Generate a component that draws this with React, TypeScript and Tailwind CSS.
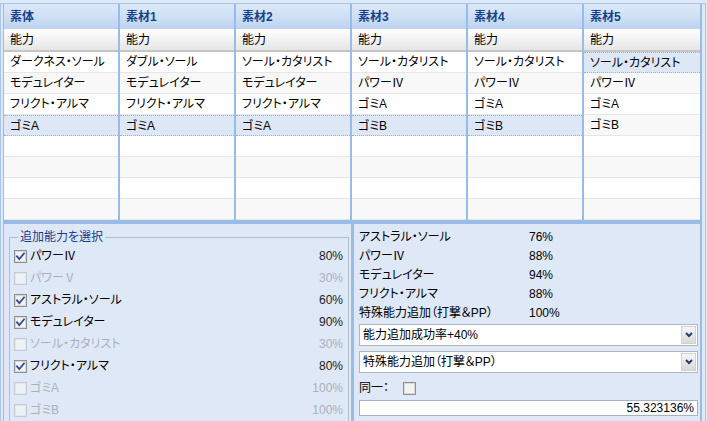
import React from 'react';

type Col = { title: string; rows: string[]; selected: number };

const columns: Col[] = [
  { title: '素体', rows: ['ダークネス・ソール', 'モデュレイター', 'フリクト・アルマ', 'ゴミA'], selected: 3 },
  { title: '素材1', rows: ['ダブル・ソール', 'モデュレイター', 'フリクト・アルマ', 'ゴミA'], selected: 3 },
  { title: '素材2', rows: ['ソール・カタリスト', 'モデュレイター', 'フリクト・アルマ', 'ゴミA'], selected: 3 },
  { title: '素材3', rows: ['ソール・カタリスト', 'パワーⅣ', 'ゴミA', 'ゴミB'], selected: 3 },
  { title: '素材4', rows: ['ソール・カタリスト', 'パワーⅣ', 'ゴミA', 'ゴミB'], selected: 3 },
  { title: '素材5', rows: ['ソール・カタリスト', 'パワーⅣ', 'ゴミA', 'ゴミB'], selected: 0 },
];

const abilities = [
  { name: 'パワーⅣ', rate: '80%', checked: true, enabled: true },
  { name: 'パワーⅤ', rate: '30%', checked: false, enabled: false },
  { name: 'アストラル・ソール', rate: '60%', checked: true, enabled: true },
  { name: 'モデュレイター', rate: '90%', checked: true, enabled: true },
  { name: 'ソール・カタリスト', rate: '30%', checked: false, enabled: false },
  { name: 'フリクト・アルマ', rate: '80%', checked: true, enabled: true },
  { name: 'ゴミA', rate: '100%', checked: false, enabled: false },
  { name: 'ゴミB', rate: '100%', checked: false, enabled: false },
];

const results = [
  ['アストラル・ソール', '76%'],
  ['パワーⅣ', '88%'],
  ['モデュレイター', '94%'],
  ['フリクト・アルマ', '88%'],
  ['特殊能力追加（打撃＆PP）', '100%'],
];

function CheckBox({ checked, enabled }: { checked: boolean; enabled: boolean }) {
  return (
    <svg width="13" height="13" viewBox="0 0 13 13" className="shrink-0">
      <rect x="0.5" y="0.5" width="12" height="12" fill={enabled ? '#f3f3f3' : '#eef1f5'} stroke={enabled ? '#8e8f8f' : '#c5cbd4'} />
      <rect x="1.5" y="1.5" width="10" height="10" fill="none" stroke={enabled ? '#d9d9d9' : '#e3e7ec'} />
      {checked && (
        <path d="M3 6.3 L5.3 9 L10 3.4" fill="none" stroke="#2f4a96" strokeWidth="1.8" strokeLinecap="square" />
      )}
    </svg>
  );
}

function Combo({ text }: { text: string }) {
  return (
    <div className="flex h-[22px] items-stretch border border-[#b1b7c0] bg-white">
      <div className="flex flex-1 items-center pl-[3px] text-[12px] text-black">{text}</div>
      <div className="m-[1px] flex w-[15px] items-center justify-center border border-[#cfd2d6] bg-gradient-to-b from-[#f6f6f6] to-[#d9d9d9]">
        <svg width="8" height="6" viewBox="0 0 8 6">
          <path d="M1 1 L4 4 L7 1" fill="none" stroke="#233f78" strokeWidth="2" />
        </svg>
      </div>
    </div>
  );
}

function GridColumn({ col, last }: { col: Col; last: boolean }) {
  const cells = [...col.rows, '', '', '', ''];
  return (
    <div className={`flex flex-col ${last ? 'flex-1' : 'w-[116px] border-r-2 border-[#99bbe8]'}`}>
      <div className="flex h-[25px] items-center bg-gradient-to-b from-[#dce8f7] via-[#cfe0f5] to-[#bcd2ef] pl-[6px] text-[12px] font-bold text-[#15428b]">
        {col.title}
      </div>
      <div className="flex h-[23px] items-center border-b-2 border-[#c6c6c6] bg-gradient-to-b from-white to-[#e6e6e6] pl-[6px] text-[12px] text-black">
        能力
      </div>
      {cells.map((c, i) => {
        const sel = i === col.selected;
        const bg = sel
          ? 'bg-[#dde7f6] border-y border-dotted border-[#98b0dc]'
          : i % 2 === 1
            ? 'bg-[#f8f8f8] border-b border-[#e6e6e6]'
            : 'bg-white border-b border-[#e6e6e6]';
        return (
          <div key={i} className={`flex h-[21px] items-center pl-[6px] text-[12px] text-black ${bg}`}>
            {c}
          </div>
        );
      })}
    </div>
  );
}

export default function App() {
  return (
    <div className="h-[421px] w-[707px] overflow-hidden bg-[#dfe8f6] pt-[3px] pr-[1px] font-['Liberation_Sans','Noto_Sans_CJK_JP',sans-serif] [font-feature-settings:'palt']">
      <div className="h-full border-x border-t border-[#a9c5ea] pl-[2px] pr-[3px]">
        <div className="flex h-full flex-col border-l border-r-2 border-[#99bbe8]">
          {/* material grids */}
          <div className="flex h-[220px] border-b-4 border-[#99bbe8] bg-white">
            {columns.map((c, i) => (
              <GridColumn key={c.title} col={c} last={i === columns.length - 1} />
            ))}
          </div>

          {/* lower panel */}
          <div className="flex flex-1 bg-[#dfe8f6]">
            <div className="w-[347px] pl-[5px] pt-[5px]">
              <fieldset className="h-[200px] w-[340px] border border-[#b4bfcd] pl-[4px] pr-[5px]">
                <legend className="ml-[4px] px-[2px] text-[12px] leading-[16px] text-[#1a3d8a]">追加能力を選択</legend>
                {abilities.map((a) => (
                  <div key={a.name} className="flex h-[22px] items-center text-[12px]">
                    <CheckBox checked={a.checked} enabled={a.enabled} />
                    <span className={`ml-[3px] flex-1 ${a.enabled ? 'text-black' : 'text-[#a9b1bd]'}`}>{a.name}</span>
                    <span className={a.enabled ? 'text-[#1b1b1b]' : 'text-[#a9b1bd]'}>{a.rate}</span>
                  </div>
                ))}
              </fieldset>
            </div>

            <div className="w-[3px] bg-[#99bbe8]" />

            <div className="flex flex-1 flex-col pl-[5px] pr-[2px] pt-[3px]">
              {results.map(([name, rate]) => (
                <div key={name} className="flex h-[19px] items-center text-[12px] text-black">
                  <span className="w-[170px]">{name}</span>
                  <span>{rate}</span>
                </div>
              ))}
              <div className="mt-[2px]">
                <Combo text="能力追加成功率+40%" />
              </div>
              <div className="mt-[5px]">
                <Combo text="特殊能力追加（打撃＆PP）" />
              </div>
              <div className="mt-[5px] flex h-[20px] items-center text-[12px] text-black">
                <span className="w-[44px]">同一：</span>
                <CheckBox checked={false} enabled={true} />
              </div>
              <div className="mt-[2px] flex h-[16px] items-center justify-end border border-[#a3b3c8] bg-white pr-[3px] text-[12px] text-black">
                55.323136%
              </div>
            </div>
          </div>
        </div>
      </div>
    </div>
  );
}
